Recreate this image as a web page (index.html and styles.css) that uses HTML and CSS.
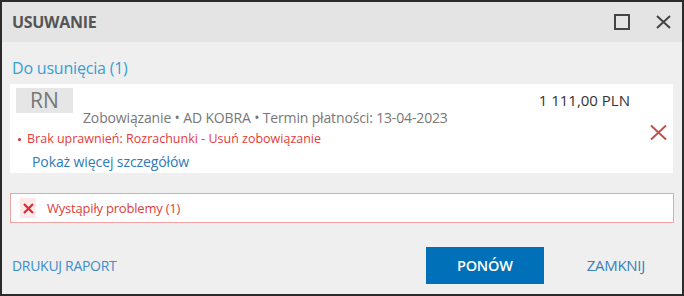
FILE: index.html
```html
<!DOCTYPE html>
<html lang="pl">
<head>
  <meta charset="UTF-8">
  <title>Usuwanie</title>
  <link rel="stylesheet" href="styles.css">
</head>
<body>
  <div class="dialog">
    <header class="dialog-header">
      <span class="dialog-title">USUWANIE</span>
      <div class="window-btns">
        <!-- maximize -->
        <svg width="16" height="16" viewBox="0 0 16 16"><rect x="1" y="1" width="14" height="14" fill="none" stroke="#444" stroke-width="2"/></svg>
        <!-- close -->
        <svg width="15" height="14" viewBox="0 0 15 14"><path d="M1 1 L14 13 M14 1 L1 13" stroke="#444" stroke-width="2" fill="none"/></svg>
      </div>
    </header>

    <main class="dialog-body">
      <h2 class="section-title">Do usunięcia (1)</h2>

      <section class="item">
        <div class="item-main">
          <div class="item-head">
            <div class="doc-type">RN</div>
            <div class="item-meta">Zobowiązanie • AD KOBRA • Termin płatności: 13-04-2023</div>
          </div>
          <div class="item-error"><span class="dot"></span>Brak uprawnień: Rozrachunki - Usuń zobowiązanie</div>
          <a class="item-more" href="#">Pokaż więcej szczegółów</a>
        </div>
        <div class="item-amount">1 111,00 PLN</div>
        <div class="item-remove">
          <svg width="17" height="15" viewBox="0 0 17 15"><path d="M1 0.5 L16 14.5 M16 0.5 L1 14.5" stroke="#c0504d" stroke-width="2" fill="none"/></svg>
        </div>
      </section>

      <div class="problems">
        <span class="problems-icon">
          <svg width="11" height="11" viewBox="0 0 11 11"><path d="M1 1 L10 10 M10 1 L1 10" stroke="#e0282e" stroke-width="2.2" fill="none"/></svg>
        </span>
        <span>Wystąpiły problemy (1)</span>
      </div>
    </main>

    <footer class="dialog-footer">
      <a class="text-btn" href="#">DRUKUJ RAPORT</a>
      <div class="footer-right">
        <button class="primary-btn">PONÓW</button>
        <a class="text-btn close-btn" href="#">ZAMKNIJ</a>
      </div>
    </footer>
  </div>
</body>
</html>
```

FILE: styles.css
```css
body {
  margin: 0;
  font-family: "Open Sans", "Noto Sans", sans-serif;
  color: #444;
}

.dialog {
  width: 684px;
  height: 296px;
  box-sizing: border-box;
  border: 2px solid #2b2b2b;
  background: #efefef;
  display: flex;
  flex-direction: column;
}

.dialog-header {
  height: 40px;
  background: #e4e4e4;
  display: flex;
  align-items: center;
  justify-content: space-between;
  padding: 0 10px;
}

.dialog-title {
  font-size: 16px;
  font-weight: 700;
  color: #555;
  letter-spacing: -0.3px;
}

.window-btns {
  display: flex;
  align-items: center;
  gap: 26px;
  padding-right: 1px;
}

.dialog-body {
  padding: 0 8px 0 8px;
  flex: 1;
}

.section-title {
  margin: 15px 0 0 2px;
  font-size: 16px;
  font-weight: 400;
  color: #35a0d2;
  line-height: 22px;
  height: 27px;
  letter-spacing: -0.2px;
}

.item {
  background: #fff;
  margin-right: 1px;
  height: 89px;
  display: flex;
  padding: 4px 0 0 6px;
  box-sizing: border-box;
}

.item-main {
  flex: 1;
}

.item-head {
  display: flex;
  align-items: flex-start;
}

.doc-type {
  width: 57px;
  height: 25px;
  background: #e6e6e6;
  color: #777;
  font-size: 21px;
  line-height: 25px;
  text-align: center;
}

.item-meta {
  margin: 20px 0 0 10px;
  font-size: 14px;
  line-height: 20px;
  color: #777;
  letter-spacing: -0.15px;
}

.item-error {
  margin-top: 1px;
  font-size: 12.5px;
  line-height: 20px;
  color: #e83a3a;
  display: flex;
  align-items: center;
}

.dot {
  width: 3px;
  height: 3px;
  border-radius: 50%;
  background: #e0282e;
  margin: 0 6px 0 2px;
}

.item-more {
  display: block;
  margin: 3px 0 0 16px;
  font-size: 14px;
  line-height: 20px;
  color: #2f7ab8;
  text-decoration: none;
  letter-spacing: -0.1px;
}

.item-amount {
  margin-top: 2px;
  font-size: 15px;
  line-height: 20px;
  color: #333;
}

.item-remove {
  align-self: center;
  margin: 6px 6px 0 20px;
}

.problems {
  margin-top: 20px;
  height: 30px;
  box-sizing: border-box;
  background: #fff;
  border: 1px solid #f0a4a4;
  display: flex;
  align-items: center;
  gap: 11px;
  padding-left: 9px;
  font-size: 13px;
  color: #e03c3c;
  letter-spacing: -0.2px;
}

.problems-icon {
  width: 16px;
  height: 20px;
  background: #fde9e9;
  display: flex;
  align-items: center;
  justify-content: center;
}

.dialog-footer {
  height: 58px;
  display: flex;
  align-items: center;
  justify-content: space-between;
  padding: 12px 10px 0 10px;
}

.footer-right {
  display: flex;
  align-items: center;
}

.text-btn {
  font-size: 14px;
  color: #3c8dcb;
  text-decoration: none;
  letter-spacing: -0.3px;
}

.primary-btn {
  width: 118px;
  height: 37px;
  background: #0070b8;
  border: none;
  color: #fff;
  font-family: inherit;
  font-size: 14.5px;
  font-weight: 600;
  letter-spacing: -0.2px;
}

.close-btn {
  margin: 0 27px 0 43px;
  font-size: 15px;
  color: #3b7fb8;
}
```
